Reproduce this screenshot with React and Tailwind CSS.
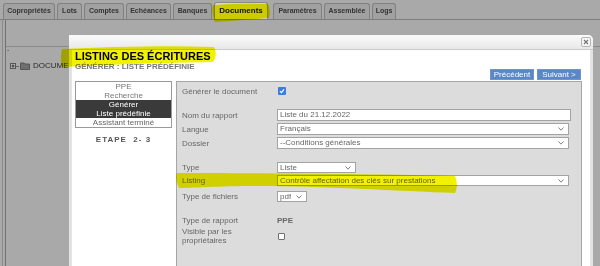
import clsx from 'clsx';

const tabs = [
  { label: 'Copropriétés', w: 'w-[52px]' },
  { label: 'Lots', w: 'w-[25px]' },
  { label: 'Comptes', w: 'w-[40px]' },
  { label: 'Echéances', w: 'w-[45px]' },
  { label: 'Banques', w: 'w-[39px]' },
  { label: 'Documents', w: 'w-[54px]', active: true },
  { label: 'Paramètres', w: 'w-[49px]' },
  { label: 'Assemblée', w: 'w-[46px]' },
  { label: 'Logs', w: 'w-[24px]' },
];

function Chevron() {
  return (
    <svg width="6" height="4" viewBox="0 0 6 4" className="shrink-0">
      <path d="M0.5 0.5 L3 3.2 L5.5 0.5" fill="none" stroke="#808080" strokeWidth="1" />
    </svg>
  );
}

function Select({ value, className }) {
  return (
    <div className={clsx('flex h-full items-center justify-between border border-[#a3a3a3] bg-white pl-[2px] pr-[4px] text-[#666]', className)}>
      <span className="truncate">{value}</span>
      <Chevron />
    </div>
  );
}

function Row({ label, className, children }) {
  return (
    <div className={clsx('flex items-center', className)}>
      <div className="w-[95px] shrink-0 leading-[9px]">{label}</div>
      {children}
    </div>
  );
}

function Highlights() {
  return (
    <svg width="600" height="266" viewBox="0 0 600 266" className="pointer-events-none absolute left-0 top-0 mix-blend-multiply">
      <g fill="#f2f200">
        <path d="M213 5 Q240 3 268 4 Q271 11 269 18 Q245 20 215 22 Q211 13 213 5 Z" />
        <path d="M62 49 Q140 45 214 47 Q218 55 213 62 Q140 63 62 67 Q60 58 62 49 Z" />
        <path d="M177 173 C250 173 380 174 455 176 Q459 185 455 193 C400 191 320 186 260 186 C220 186 190 188 179 188 Q175 180 177 173 Z" />
      </g>
    </svg>
  );
}

export default function App() {
  return (
    <div className="relative h-[266px] w-[600px] overflow-hidden bg-[#a9a9a9] font-['Liberation_Sans',Arial,sans-serif]">
      {/* page behind the dialog */}
      <div className="flex h-[20px] items-end gap-[2px] border-b border-[#7e7e7e] pl-[3px]">
        {tabs.map((t) => (
          <div
            key={t.label}
            className={clsx(
              'flex shrink-0 items-center justify-center rounded-t-[3px] border border-b-0 font-bold',
              t.w,
              t.active
                ? 'mr-[3px] h-[17px] border-[#8a8a8a] bg-[#d6d6d6] text-[8px] text-[#111]'
                : 'h-[16px] border-[#808080] bg-[#a1a1a1] text-[7px] text-[#333]'
            )}
          >
            {t.label}
          </div>
        ))}
      </div>
      <div className="ml-[2px] h-[246px] border-l border-[#8c8c8c] pl-[2px]">
        <div className="h-full border-l border-[#727272]">
          <div className="h-[27px] border-b border-[#8a8a8a]" />
          <div className="pl-[1px] text-[7px] leading-[6px] text-[#444]">-</div>
          <div className="mt-[7px] flex items-center pl-[4px] text-[8px] text-[#2a2a2a]">
            <svg width="6" height="6" viewBox="0 0 6 6" className="shrink-0">
              <rect x="0.5" y="0.5" width="5" height="5" fill="#b8b8b8" stroke="#555" />
              <path d="M1.5 3 H4.5 M3 1.5 V4.5" stroke="#333" />
            </svg>
            <div className="h-px w-[3px] bg-[#666]" />
            <svg width="10" height="8" viewBox="0 0 10 8" className="ml-[1px] shrink-0">
              <path d="M0.5 1 H4 L5 2 H9.5 V7.5 H0.5 Z" fill="#6e6e6e" stroke="#555" />
            </svg>
            <span className="ml-[3px]">DOCUMENT</span>
          </div>
        </div>
      </div>

      {/* dialog */}
      <div className="absolute left-[69px] top-[35px] flex h-[240px] w-[524px] flex-col rounded-tr-[5px] bg-[#e3e3e3]">
        <div className="flex h-[15px] shrink-0 items-center justify-end rounded-tr-[5px] border-b border-[#cbcbcb] bg-gradient-to-b from-[#fbfbfb] to-[#e8e8e8] pr-[2px]">
          <div className="flex h-[10px] w-[10px] items-center justify-center rounded-[2px] border border-[#b4b4b4] bg-[#f6f6f6]">
            <svg width="6" height="6" viewBox="0 0 6 6">
              <path d="M1 1 L5 5 M5 1 L1 5" stroke="#777" strokeWidth="1.2" />
            </svg>
          </div>
        </div>
        <div className="mx-[3px] flex-1 bg-white pl-[3px] pr-[8px]">
          <div className="flex h-[31px]">
            <div className="pt-[1px]">
              <div className="text-[11px] font-bold leading-[11px] text-black">LISTING DES ÉCRITURES</div>
              <div className="text-[8px] font-bold leading-[10px] text-[#777]">GÉNÉRER : LISTE PRÉDÉFINIE</div>
            </div>
            <div className="mb-[1px] mr-[1px] ml-auto flex gap-[3px] self-end">
              <button className="h-[11px] w-[44px] border border-[#6f95cc] bg-[#5a87c6] text-[8px] leading-[9px] text-white">Précédent</button>
              <button className="h-[11px] w-[44px] border border-[#6f95cc] bg-[#5a87c6] text-[8px] leading-[9px] text-white">Suivant &gt;</button>
            </div>
          </div>

          <div className="flex gap-[4px]">
            <div className="w-[97px] shrink-0">
              <div className="border border-[#999] bg-white text-center text-[8px] leading-[9px]">
                <div className="text-[#777]">PPE</div>
                <div className="text-[#777]">Recherche</div>
                <div className="bg-[#3a3a3a] text-white">
                  <div>Générer</div>
                  <div>Liste prédéfinie</div>
                </div>
                <div className="text-[#666]">Assistant terminé</div>
              </div>
              <div className="mt-[7px] text-center text-[8px] font-bold leading-[10px] tracking-[1px] text-[#555]">ETAPE&nbsp; 2- 3</div>
            </div>

            <div className="h-[190px] w-[406px] shrink-0 border border-b-0 border-[#a6a6a6] bg-[#dcdcdc] pl-[5px] pt-[4px] text-[8px] text-[#666]">
              <Row label="Générer le document" className="h-[10px]">
                <div className="ml-[1px] flex h-[8px] w-[8px] items-center justify-center rounded-[1px] bg-[#3b7de0]">
                  <svg width="6" height="6" viewBox="0 0 6 6">
                    <path d="M1 3.2 L2.5 4.6 L5 1.4" fill="none" stroke="white" strokeWidth="1.2" />
                  </svg>
                </div>
              </Row>
              <Row label="Nom du rapport" className="mt-[13px] h-[12px]">
                <div className="flex h-full w-[294px] items-center border border-[#a3a3a3] bg-white pl-[2px] text-[#666]">Liste du 21.12.2022</div>
              </Row>
              <Row label="Langue" className="mt-[2px] h-[12px]">
                <Select value="Français" className="w-[292px]" />
              </Row>
              <Row label="Dossier" className="mt-[2px] h-[12px]">
                <Select value="--Conditions générales" className="w-[292px]" />
              </Row>
              <Row label="Type" className="mt-[13px] h-[11px]">
                <Select value="Liste" className="w-[79px]" />
              </Row>
              <Row label="Listing" className="mt-[2px] h-[11px]">
                <Select value="Contrôle affectation des clés sur prestations" className="w-[292px]" />
              </Row>
              <Row label="Type de fichiers" className="mt-[5px] h-[11px]">
                <Select value="pdf" className="w-[30px]" />
              </Row>
              <Row label="Type de rapport" className="mt-[13px] h-[11px]">
                <span className="font-bold text-[#666]">PPE</span>
              </Row>
              <Row label={<>Visible par les<br />propriétaires</>} className="mt-[1px] h-[18px]">
                <div className="ml-[1px] h-[7px] w-[7px] rounded-[1px] border border-[#707070] bg-white" />
              </Row>
            </div>
          </div>
        </div>
      </div>

      <Highlights />
    </div>
  );
}
